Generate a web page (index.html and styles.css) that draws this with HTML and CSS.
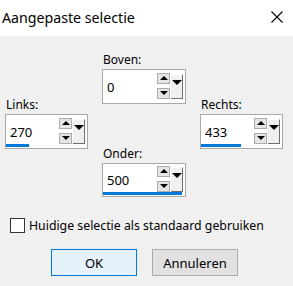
FILE: index.html
```html
<!DOCTYPE html>
<html>
<head>
    <meta charset="UTF-8">
    <title>Aangepaste selectie</title>
    <link rel="stylesheet" href="styles.css">
</head>
<body>
    <div class="titlebar">
        <span class="title">Aangepaste selectie</span>
        <svg class="close" width="12" height="12" viewBox="0 0 12 12">
            <path d="M0.5 0.5 L11.5 11.5 M11.5 0.5 L0.5 11.5" stroke="#000" stroke-width="1.1" fill="none"/>
        </svg>
    </div>
    <div class="dialog">
        <div class="spinners">
            <div class="group boven">
                <div class="label">Boven:</div>
                <div class="box">
                    <span class="value">0</span>
                    <div class="spin">
                        <div class="spinbtn"><span class="up"></span></div>
                        <div class="spinbtn"><span class="down"></span></div>
                    </div>
                    <div class="drop"><span class="down big"></span></div>
                    <div class="bar" style="width: 0%"></div>
                </div>
            </div>
            <div class="group links">
                <div class="label">Links:</div>
                <div class="box">
                    <span class="value">270</span>
                    <div class="spin">
                        <div class="spinbtn"><span class="up"></span></div>
                        <div class="spinbtn"><span class="down"></span></div>
                    </div>
                    <div class="drop"><span class="down big"></span></div>
                    <div class="bar" style="width: 29%"></div>
                </div>
            </div>
            <div class="group rechts">
                <div class="label">Rechts:</div>
                <div class="box">
                    <span class="value">433</span>
                    <div class="spin">
                        <div class="spinbtn"><span class="up"></span></div>
                        <div class="spinbtn"><span class="down"></span></div>
                    </div>
                    <div class="drop"><span class="down big"></span></div>
                    <div class="bar" style="width: 49%"></div>
                </div>
            </div>
            <div class="group onder">
                <div class="label">Onder:</div>
                <div class="box">
                    <span class="value">500</span>
                    <div class="spin">
                        <div class="spinbtn"><span class="up"></span></div>
                        <div class="spinbtn"><span class="down"></span></div>
                    </div>
                    <div class="drop"><span class="down big"></span></div>
                    <div class="bar" style="width: 100%"></div>
                </div>
            </div>
        </div>
        <label class="check">
            <span class="checkbox"></span>
            <span>Huidige selectie als standaard gebruiken</span>
        </label>
        <div class="buttons">
            <button class="ok">OK</button>
            <button>Annuleren</button>
        </div>
    </div>
</body>
</html>
```

FILE: styles.css
```css
html,
body {
    margin: 0;
    width: 293px;
    height: 286px;
    overflow: hidden;
    background: #f0f0f0;
    font-family: "Noto Sans", "Open Sans", sans-serif;
    font-size: 12px;
    color: #000;
}
.titlebar {
    height: 36px;
    background: #fff;
    display: flex;
    align-items: center;
    justify-content: space-between;
    padding: 0 10px 0 2px;
}
.title {
    font-size: 14.2px;
    margin-top: -1px;
}
.close {
    margin-top: -2px;
}
.dialog {
    padding: 17px 0 0 5px;
}
.spinners {
    display: grid;
    grid-template-columns: 83px 84px 83px;
    grid-template-rows: 45px 6px 43px 2px 48px;
    column-gap: 14px;
}
.boven {
    grid-column: 2;
    grid-row: 1 / 3;
}
.links {
    grid-column: 1;
    grid-row: 2 / 5;
}
.rechts {
    grid-column: 3;
    grid-row: 2 / 5;
}
.onder {
    grid-column: 2;
    grid-row: 4 / 6;
}
.group {
    display: flex;
    flex-direction: column;
}
.label {
    height: 16px;
    line-height: 14px;
    padding-left: 1px;
}
.box {
    position: relative;
    height: 35px;
    box-sizing: border-box;
    border: 1px solid #a9a9a9;
    background: #fff;
    display: flex;
    align-items: center;
    padding: 0 2px 0 4px;
}
.value {
    flex: 1;
    font-size: 13px;
    margin-top: 1px;
}
.spin {
    display: flex;
    flex-direction: column;
    gap: 4px;
    margin-top: -2px;
}
.spinbtn {
    width: 11px;
    height: 9px;
    border: 1px solid #adadad;
    background: #e5e5e5;
    display: flex;
    align-items: center;
    justify-content: center;
}
.drop {
    width: 12px;
    height: 25px;
    margin-left: 1px;
    background: #f0f0f0;
    border-right: 1px solid #6d6d6d;
    border-bottom: 1px solid #6d6d6d;
    border-top: 1px solid #fff;
    display: flex;
    align-items: flex-start;
    justify-content: center;
    padding-top: 5px;
    box-sizing: border-box;
}
.up {
    width: 0;
    height: 0;
    border-left: 4px solid transparent;
    border-right: 4px solid transparent;
    border-bottom: 4px solid #000;
}
.down {
    width: 0;
    height: 0;
    border-left: 4px solid transparent;
    border-right: 4px solid transparent;
    border-top: 4px solid #000;
}
.down.big {
    border-left-width: 5px;
    border-right-width: 5px;
    border-top-width: 5px;
}
/* blauwe voortgangsbalk onderin */
.bar {
    position: absolute;
    left: 0;
    bottom: 1px;
    height: 3px;
    max-width: 79px;
    background: #0078d7;
}
.check {
    display: flex;
    align-items: center;
    gap: 4px;
    margin: 20px 0 0 5px;
    font-size: 12.3px;
}
.checkbox {
    width: 13px;
    height: 13px;
    border: 1px solid #333;
    background: #fff;
}
.buttons {
    display: flex;
    gap: 15px;
    padding: 15px 0 0 46px;
}
button {
    width: 86px;
    height: 27px;
    font-family: inherit;
    font-size: 13px;
    color: #000;
    background: #e1e1e1;
    border: 1px solid #adadad;
    padding: 0;
}
button.ok {
    background: #e5f1fb;
    border-color: #0078d7;
}
```
